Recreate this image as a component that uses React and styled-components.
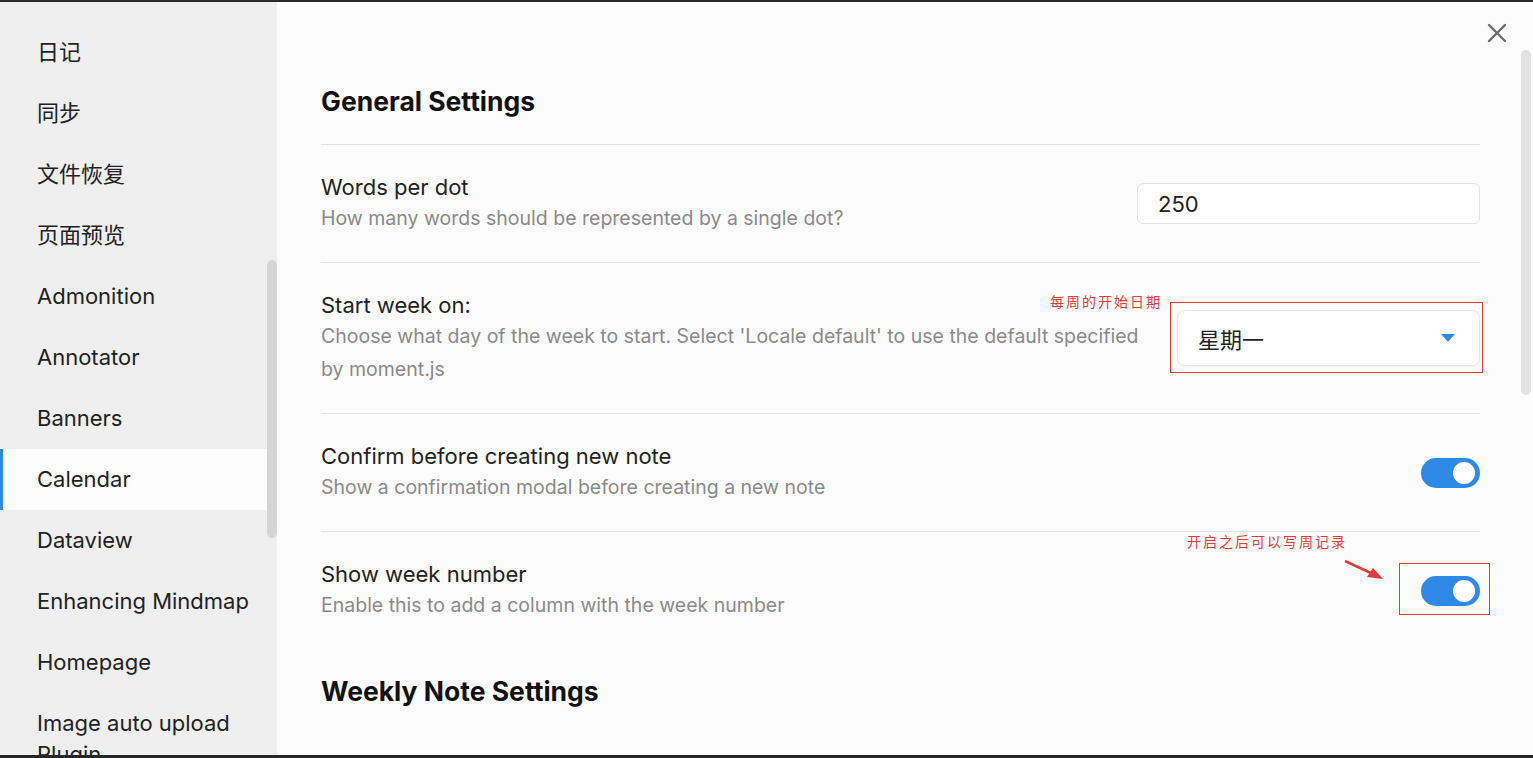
import React from "react";
import styled, { createGlobalStyle } from "styled-components";

const GlobalStyle = createGlobalStyle`
    html, body {
        margin: 0;
        padding: 0;
        background: #fcfcfc;
    }
    * {
        box-sizing: border-box;
    }
`;

const Frame = styled.div`
    height: 758px;
    width: 1533px;
    display: flex;
    border-top: 2px solid #2b2b2b;
    border-bottom: 3px solid #262626;
    font-family: Inter, "Noto Sans CJK SC", sans-serif;
    overflow: hidden;
`;

/* 왼쪽 메뉴 영역 */
const SideBar = styled.aside`
    width: 277px;
    flex-shrink: 0;
    display: flex;
    background-color: #efefef;
`;

const MenuList = styled.ul`
    margin: 0;
    padding: 20px 0 0;
    width: 267px;
    list-style: none;
`;

const MenuItem = styled.li`
    position: relative;
    padding: 15px 8px 15px 37px;
    font-size: 22px;
    line-height: 31px;
    color: #222;
    background-color: ${({ active }) => (active ? "#fdfdfd" : "transparent")};
    &::before {
        content: "";
        position: absolute;
        left: 0;
        top: 0;
        bottom: 0;
        width: 3px;
        background-color: ${({ active }) => (active ? "#2e8ae6" : "transparent")};
    }
`;

const ScrollTrack = styled.div`
    width: 10px;
    padding-top: ${({ offset }) => offset}px;
`;

const ScrollThumb = styled.div`
    width: 10px;
    height: ${({ size }) => size}px;
    border-radius: 5px;
    background-color: ${({ color }) => color};
`;

/* 오른쪽 설정 영역 */
const Main = styled.main`
    position: relative;
    flex: 1;
    display: flex;
    background-color: #fcfcfc;
`;

const Content = styled.div`
    flex: 1;
    padding: 83px 41px 0 44px;
`;

const CloseButton = styled.button`
    position: absolute;
    top: 19px;
    right: 24px;
    width: 24px;
    height: 24px;
    padding: 0;
    border: none;
    background: none;
    display: flex;
    align-items: center;
    justify-content: center;
`;

const Heading = styled.h2`
    margin: ${({ top }) => top}px 0 27px;
    font-size: 26.5px;
    line-height: 32px;
    font-weight: 700;
    color: #111;
`;

const SettingRow = styled.div`
    display: flex;
    align-items: center;
    gap: 34px;
    padding: 27px 0 27px;
    border-top: 1px solid #e3e3e3;
`;

const Info = styled.div`
    flex: 1;
`;

const Title = styled.div`
    font-size: 22px;
    line-height: 30px;
    color: #222;
`;

const Desc = styled.div`
    font-size: 19.5px;
    line-height: 33px;
    color: #8a8a8a;
`;

const Control = styled.div`
    position: relative;
    flex-shrink: 0;
`;

const TextInput = styled.div`
    width: 343px;
    height: 41px;
    padding: 0 20px;
    display: flex;
    align-items: center;
    border: 1px solid #e3e3e3;
    border-radius: 6px;
    background-color: #fff;
    font-size: 22px;
    color: #222;
`;

const Dropdown = styled.div`
    width: 303px;
    height: 56px;
    padding: 0 20px;
    display: flex;
    align-items: center;
    justify-content: space-between;
    border: 1px solid #e8e8e8;
    border-radius: 8px;
    background-color: #fff;
    box-shadow: 0 1px 2px rgba(0, 0, 0, 0.05);
    font-size: 22px;
    color: #222;
`;

const Caret = styled.span`
    width: 0;
    height: 0;
    border-left: 7px solid transparent;
    border-right: 7px solid transparent;
    border-top: 8px solid #2e8ae6;
    margin-right: 4px;
`;

const Toggle = styled.div`
    width: 59px;
    height: 30px;
    border-radius: 15px;
    background-color: #2e8ae6;
    display: flex;
    align-items: center;
    justify-content: flex-end;
    padding-right: 5px;
    &::after {
        content: "";
        width: 22px;
        height: 22px;
        border-radius: 50%;
        background-color: #fff;
    }
`;

/* 빨간 주석 표시 */
const MarkBox = styled.div`
    position: absolute;
    top: ${({ t }) => t}px;
    right: ${({ r }) => r}px;
    bottom: ${({ b }) => b}px;
    left: ${({ l }) => l}px;
    border: 1px solid #e23a3a;
    pointer-events: none;
`;

const MarkText = styled.span`
    position: absolute;
    top: ${({ t }) => t}px;
    right: ${({ r }) => r}px;
    font-family: "Noto Sans CJK SC", sans-serif;
    font-size: 14px;
    letter-spacing: 2px;
    line-height: 18px;
    white-space: nowrap;
    color: #e23a3a;
`;

const Arrow = styled.svg`
    position: absolute;
    top: -17px;
    left: -78px;
`;

const menus = [
    "日记",
    "同步",
    "文件恢复",
    "页面预览",
    "Admonition",
    "Annotator",
    "Banners",
    "Calendar",
    "Dataview",
    "Enhancing Mindmap",
    "Homepage",
    "Image auto upload Plugin",
];

function App() {
    return (
        <>
            <GlobalStyle />
            <Frame>
                <SideBar>
                    <MenuList>
                        {menus.map((m) => (
                            <MenuItem key={m} active={m === "Calendar"}>
                                {m}
                            </MenuItem>
                        ))}
                    </MenuList>
                    <ScrollTrack offset={258}>
                        <ScrollThumb size={278} color="#d4d4d4" />
                    </ScrollTrack>
                </SideBar>
                <Main>
                    <CloseButton aria-label="close">
                        <svg width="20" height="20" viewBox="0 0 20 20">
                            <path d="M2 2 L18 18 M18 2 L2 18" stroke="#6b6b6b" strokeWidth="2.4" strokeLinecap="round" />
                        </svg>
                    </CloseButton>
                    <Content>
                        <Heading top={0}>General Settings</Heading>
                        <SettingRow>
                            <Info>
                                <Title>Words per dot</Title>
                                <Desc>How many words should be represented by a single dot?</Desc>
                            </Info>
                            <Control>
                                <TextInput>250</TextInput>
                            </Control>
                        </SettingRow>
                        <SettingRow>
                            <Info>
                                <Title>Start week on:</Title>
                                <Desc>
                                    Choose what day of the week to start. Select 'Locale default' to use the default specified by moment.js
                                </Desc>
                            </Info>
                            <Control>
                                <Dropdown>
                                    星期一
                                    <Caret />
                                </Dropdown>
                                <MarkBox t={-8} r={-3} b={-7} l={-7} />
                                <MarkText t={-18} r={318}>每周的开始日期</MarkText>
                            </Control>
                        </SettingRow>
                        <SettingRow>
                            <Info>
                                <Title>Confirm before creating new note</Title>
                                <Desc>Show a confirmation modal before creating a new note</Desc>
                            </Info>
                            <Control>
                                <Toggle />
                            </Control>
                        </SettingRow>
                        <SettingRow>
                            <Info>
                                <Title>Show week number</Title>
                                <Desc>Enable this to add a column with the week number</Desc>
                            </Info>
                            <Control>
                                <Toggle />
                                <MarkBox t={-13} r={-10} b={-9} l={-22} />
                                <MarkText t={-44} r={133}>开启之后可以写周记录</MarkText>
                                <Arrow width="44" height="24" viewBox="0 0 44 24">
                                    <path d="M2 2 L30 15" stroke="#e23a3a" strokeWidth="2.5" />
                                    <polygon points="40,20 24,18 30,9" fill="#e23a3a" />
                                </Arrow>
                            </Control>
                        </SettingRow>
                        <Heading top={26}>Weekly Note Settings</Heading>
                    </Content>
                    <ScrollTrack offset={48}>
                        <ScrollThumb size={345} color="#e2e2e2" />
                    </ScrollTrack>
                    <div style={{ width: 2 }} />
                </Main>
            </Frame>
        </>
    );
}

export default App;
